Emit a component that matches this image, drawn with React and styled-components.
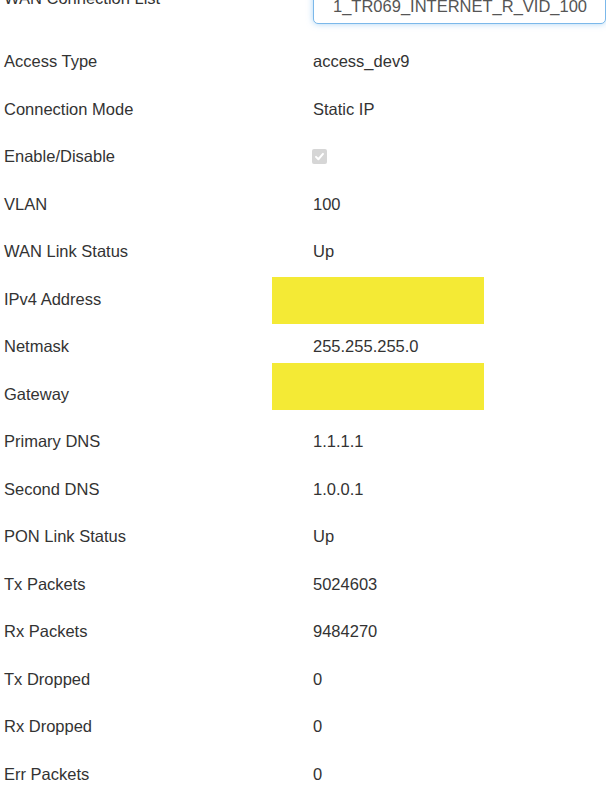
import styled, { createGlobalStyle } from "styled-components";

const GlobalStyle = createGlobalStyle`
  html, body {
    margin: 0;
    padding: 0;
    background: #fff;
    overflow: hidden;
  }
  body {
    font-family: "Liberation Sans", Arial, sans-serif;
    color: #333;
  }
`;

const Page = styled.div`
  position: relative;
  margin-top: -9.6px;
  padding-left: 4px;
`;

const Row = styled.div`
  display: flex;
  align-items: center;
  height: 47.53px;
  font-size: 16.5px;
`;

const TopRow = styled(Row)`
  align-items: flex-start;
`;

const Label = styled.div`
  width: 309px;
  flex-shrink: 0;
  color: #333;
`;

const TopLabel = styled(Label)`
  margin-top: -1.5px;
  line-height: 18px;
`;

const Value = styled.div`
  color: #333;
  white-space: nowrap;
`;

const SelectBox = styled.div`
  box-sizing: border-box;
  width: 330px;
  height: 34px;
  margin-top: -0.7px;
  padding-left: 19px;
  display: flex;
  align-items: center;
  border: 1px solid #7bb8ea;
  border-radius: 5px;
  box-shadow: 0 0 6px rgba(102, 175, 233, 0.55);
  color: #555;
  font-size: 16.5px;
  white-space: nowrap;
  background: #fff;
`;

const Check = styled.span`
  display: inline-flex;
  align-items: center;
  justify-content: center;
  width: 15px;
  height: 15px;
  margin-left: -1px;
  border-radius: 2px;
  background: #d6d6d6;
`;

const Redaction = styled.div`
  position: absolute;
  left: 272px;
  top: ${(p) => p.$top}px;
  width: 212px;
  height: 47px;
  background: #f4ea35;
`;

const rows = [
  ["Access Type", "access_dev9"],
  ["Connection Mode", "Static IP"],
  ["Enable/Disable", "check"],
  ["VLAN", "100"],
  ["WAN Link Status", "Up"],
  ["IPv4 Address", ""],
  ["Netmask", "255.255.255.0"],
  ["Gateway", ""],
  ["Primary DNS", "1.1.1.1"],
  ["Second DNS", "1.0.0.1"],
  ["PON Link Status", "Up"],
  ["Tx Packets", "5024603"],
  ["Rx Packets", "9484270"],
  ["Tx Dropped", "0"],
  ["Rx Dropped", "0"],
  ["Err Packets", "0"],
];

const CheckMark = () => (
  <Check>
    <svg width="11" height="11" viewBox="0 0 12 12">
      <path d="M2.2 6.4 L4.8 9 L9.8 3.2" fill="none" stroke="#fff" strokeWidth="2.2" strokeLinecap="round" strokeLinejoin="round" />
    </svg>
  </Check>
);

export default function App() {
  return (
    <>
      <GlobalStyle />
      <Page>
        <TopRow>
          <TopLabel>WAN Connection List</TopLabel>
          <SelectBox>1_TR069_INTERNET_R_VID_100</SelectBox>
        </TopRow>
        {rows.map(([label, value]) => (
          <Row key={label}>
            <Label>{label}</Label>
            <Value>{value === "check" ? <CheckMark /> : value}</Value>
          </Row>
        ))}
        <Redaction $top={286.6} />
        <Redaction $top={372.6} />
      </Page>
    </>
  );
}
